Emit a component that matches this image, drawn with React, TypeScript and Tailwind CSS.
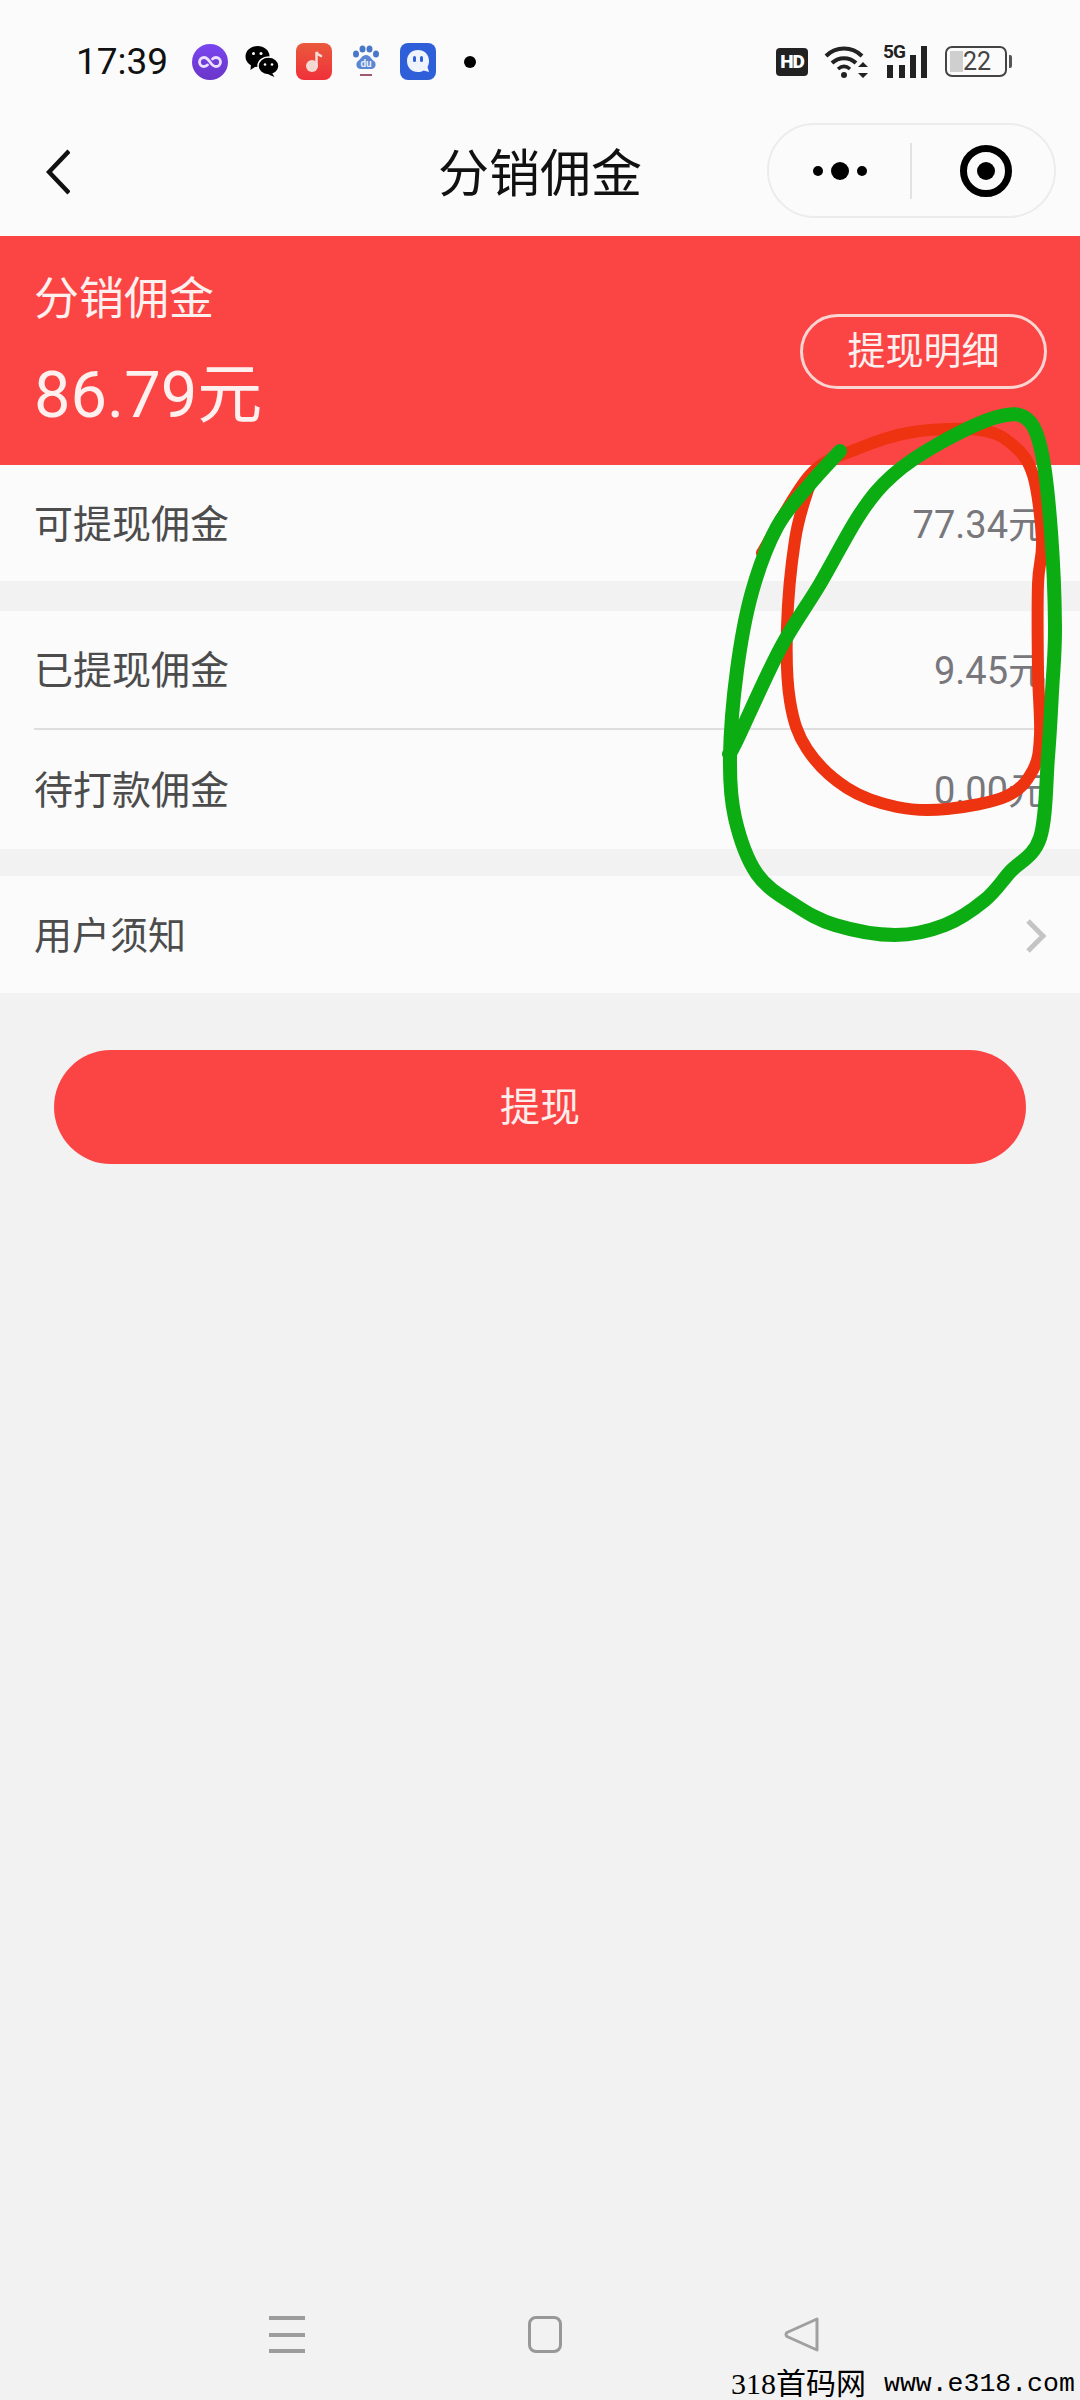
import React from "react";

type Pt = [number, number];

const GREEN: Pt[] = [
  [840, 451], [810, 484], [777, 527], [752, 592], [737, 670], [730, 757], [735, 818], [757, 874],
  [795, 905], [835, 925], [895, 935], [945, 925], [985, 900], [1010, 872], [1040, 838], [1048, 757],
  [1052, 692], [1055, 627], [1051, 532], [1042, 454], [1027, 419], [997, 417], [940, 443], [893, 475],
  [860, 514], [820, 584], [780, 649], [737, 740], [729, 754],
];

const RED: Pt[] = [
  [762, 553], [810, 475], [857, 449], [913, 432], [980, 430], [1013, 445], [1033, 475], [1042, 540],
  [1038, 584], [1038, 670], [1040, 735], [1033, 770], [1007, 796], [947, 809], [897, 807], [847, 788],
  [807, 749], [790, 701], [787, 627], [795, 540], [808, 490], [818, 470],
];

// catmull-rom through the hand-drawn points
function smooth(pts: Pt[]): string {
  let d = `M${pts[0][0]} ${pts[0][1]}`;
  for (let i = 0; i < pts.length - 1; i++) {
    const p0 = pts[Math.max(i - 1, 0)];
    const p1 = pts[i];
    const p2 = pts[i + 1];
    const p3 = pts[Math.min(i + 2, pts.length - 1)];
    const c1x = p1[0] + (p2[0] - p0[0]) / 6;
    const c1y = p1[1] + (p2[1] - p0[1]) / 6;
    const c2x = p2[0] - (p3[0] - p1[0]) / 6;
    const c2y = p2[1] - (p3[1] - p1[1]) / 6;
    d += ` C${c1x} ${c1y} ${c2x} ${c2y} ${p2[0]} ${p2[1]}`;
  }
  return d;
}

function AppIcons() {
  return (
    <div className="flex items-center gap-[16px]">
      {/* purple link */}
      <svg width="36" height="36" viewBox="0 0 36 36">
        <defs>
          <linearGradient id="pp" x1="0" y1="0" x2="0" y2="1">
            <stop offset="0" stopColor="#7a45f0" />
            <stop offset="1" stopColor="#6a35c8" />
          </linearGradient>
        </defs>
        <circle cx="18" cy="18" r="18" fill="url(#pp)" />
        <path d="M18 18c-2-3-3.500-4.500-6-4.500a4.500 4.500 0 0 0 0 9c1.500 0 2.600-.5 3.500-1.400M18 18c2 3 3.500 4.500 6 4.500a4.500 4.500 0 0 0 0-9c-1.500 0-2.600.5-3.500 1.400" fill="none" stroke="#eadfff" strokeWidth="2.800" strokeLinecap="round" />
      </svg>
      {/* wechat */}
      <svg width="36" height="36" viewBox="0 0 36 36">
        <ellipse cx="13.500" cy="12.500" rx="12" ry="10.500" fill="#000" />
        <path d="M7 20l-.5 6 6-4z" fill="#000" />
        <ellipse cx="24.500" cy="22" rx="10.500" ry="9" stroke="#fbfbfb" strokeWidth="1.500" fill="#000" />
        <path d="M28 29l2.500 4-6-2.500z" fill="#000" />
        <circle cx="9.500" cy="9.500" r="1.500" fill="#fbfbfb" />
        <circle cx="17" cy="9.500" r="1.500" fill="#fbfbfb" />
        <circle cx="21" cy="20.500" r="1.300" fill="#fbfbfb" />
        <circle cx="28" cy="20.500" r="1.300" fill="#fbfbfb" />
      </svg>
      {/* music */}
      <svg width="36" height="37" viewBox="0 0 36 37">
        <defs>
          <linearGradient id="rd" x1="0" y1="0" x2="0" y2="1">
            <stop offset="0" stopColor="#ea5a3c" />
            <stop offset="1" stopColor="#f0303a" />
          </linearGradient>
        </defs>
        <rect width="36" height="37" rx="8" fill="url(#rd)" />
        <circle cx="16" cy="23" r="6" fill="#f3d8d2" />
        <path d="M20.500 23V9c1 2.500 3 3.500 4.500 4" fill="none" stroke="#f6dcd6" strokeWidth="2.500" strokeLinecap="round" />
      </svg>
      {/* baidu */}
      <svg width="36" height="36" viewBox="0 0 36 36">
        <ellipse cx="8" cy="10" rx="3" ry="3.500" fill="#4a78c8" />
        <ellipse cx="14.500" cy="5" rx="3" ry="3.500" fill="#4a78c8" />
        <ellipse cx="21.500" cy="5" rx="3" ry="3.500" fill="#4a78c8" />
        <ellipse cx="28" cy="10" rx="3" ry="3.500" fill="#4a78c8" />
        <path d="M18 11c-4 0-5 4-8 6-3 2.500-1.500 8 2.500 8h11c4 0 5.500-5.500 2.500-8-3-2-4-6-8-6z" fill="#5a86d2" />
        <text x="18" y="23" textAnchor="middle" fontSize="10" fontFamily="Roboto, sans-serif" fontWeight="700" fill="#e8eefa">du</text>
        <rect x="12" y="30" width="12" height="2" fill="#a05a70" />
      </svg>
      {/* blue ghost */}
      <svg width="36" height="37" viewBox="0 0 36 37">
        <rect width="36" height="37" rx="8" fill="#2f5fd8" />
        <path d="M18 7c-6.500 0-11 4.500-11 11s4.500 11 11 11c2 0 4-.5 5.500-1.500L29 29l-1.500-5c1-1.800 1.500-3.800 1.500-6 0-6.500-4.500-11-11-11z" fill="#eef3fd" />
        <rect x="13" y="13" width="3" height="6" rx="1.500" fill="#2f5fd8" />
        <rect x="20" y="13" width="3" height="6" rx="1.500" fill="#2f5fd8" />
      </svg>
      <div className="ml-[12px] h-[12px] w-[12px] rounded-full bg-black" />
    </div>
  );
}

function SysIcons() {
  return (
    <div className="flex items-center">
      <div className="flex h-[28px] w-[32px] items-center justify-center rounded-[4px] bg-[#222] font-['Roboto',sans-serif] text-[19px] leading-none font-black tracking-[-1px] text-white">
        HD
      </div>
      {/* wifi */}
      <svg className="ml-[16px]" width="45" height="34" viewBox="0 0 45 34">
        <path d="M2 11C12 1 28 1 38 11" fill="none" stroke="#222" strokeWidth="4" />
        <path d="M8 18c7-6.500 17-6.500 24 0" fill="none" stroke="#222" strokeWidth="4" />
        <path d="M14 24c4-3.500 8-3.500 12 0" fill="none" stroke="#222" strokeWidth="3.500" />
        <circle cx="20" cy="30" r="3" fill="#222" />
        <path d="M39 17l5 5H34zM39 33l5-5H34z" fill="#222" />
      </svg>
      {/* 5G + signal */}
      <div className="relative ml-[14px] h-[34px] w-[45px]">
        <span className="absolute top-[-3px] left-0 font-['Roboto',sans-serif] text-[19px] leading-[20px] font-bold tracking-[-1px] text-[#222]">5G</span>
        <svg className="absolute top-0 left-0" width="45" height="34" viewBox="0 0 45 34">
          <rect x="4" y="20" width="6" height="13" fill="#222" />
          <rect x="16" y="20" width="6" height="13" fill="#222" />
          <rect x="27" y="10" width="6" height="23" fill="#222" />
          <rect x="38" y="1" width="6" height="32" fill="#222" />
        </svg>
      </div>
      {/* battery */}
      <div className="ml-[17px] flex items-center">
        <div className="relative flex h-[31px] w-[62px] items-center overflow-hidden rounded-[7px] border-[2px] border-[#444]">
          <div className="ml-[3px] h-[21px] w-[13px] bg-[#cfcfcf]" />
          <span className="absolute left-[16px] font-['Roboto',sans-serif] text-[25px] leading-none text-[#444]">22</span>
        </div>
        <div className="ml-[2px] h-[13px] w-[3px] rounded-r-[2px] bg-[#555]" />
      </div>
    </div>
  );
}

function Row({ label, value, border }: { label: string; value?: string; border?: boolean }) {
  return (
    <div className={`flex h-full items-center justify-between pt-[4px] ${border ? "border-b-[2px] border-[#dedede]" : ""}`}>
      <span className="text-[39px] text-[#4c4c4c]">{label}</span>
      {value ? <span className="text-[38px] text-[#77777c]">{value}</span> : null}
    </div>
  );
}

export default function App() {
  return (
    <div className="relative h-[2400px] w-[1080px] overflow-hidden bg-[#f3f2f3] font-['Roboto','Noto_Sans_CJK_SC',sans-serif]">
      {/* status bar + nav */}
      <div className="bg-[#fbfbfb]">
        <div className="flex h-[123px] items-center justify-between pr-[68px] pl-[76px]">
          <div className="flex items-center gap-[23px]">
            <span className="w-[93px] text-[37px] text-[#111]">17:39</span>
            <AppIcons />
          </div>
          <SysIcons />
        </div>
        <div className="relative flex h-[113px] items-start justify-between pr-[24px] pl-[46px]">
          <svg className="mt-[26px]" width="24" height="46" viewBox="0 0 24 46">
            <path d="M23 2L3 23l20 21" fill="none" stroke="#111" strokeWidth="4.500" />
          </svg>
          <div className="absolute top-[24px] left-0 w-full text-center text-[51px] leading-[56px] text-[#111]">分销佣金</div>
          <div className="relative flex h-[95px] w-[289px] items-center rounded-full border-[2px] border-[#ececec]">
            <div className="flex w-[141px] items-center justify-center gap-[8px]">
              <div className="h-[10px] w-[10px] rounded-full bg-black" />
              <div className="h-[18px] w-[18px] rounded-full bg-black" />
              <div className="h-[10px] w-[10px] rounded-full bg-black" />
            </div>
            <div className="h-[56px] w-[2px] bg-[#e2e2e2]" />
            <div className="flex flex-1 items-center justify-center pl-[6px]">
              <div className="flex h-[52px] w-[52px] items-center justify-center rounded-full border-[7px] border-black">
                <div className="h-[18px] w-[18px] rounded-full bg-black" />
              </div>
            </div>
          </div>
        </div>
      </div>

      {/* balance */}
      <div className="flex h-[229px] items-start justify-between bg-[#fb4545] pr-[33px] pl-[34px] text-[#fdf0ee]">
        <div>
          <div className="mt-[36px] text-[45px] leading-[56px]">分销佣金</div>
          <div className="mt-[25px] text-[65px] leading-[84px]">86.79元</div>
        </div>
        <div className="mt-[78px] flex h-[75px] w-[247px] items-center justify-center rounded-full border-[3px] border-[#fbd5d2] text-[38px]">
          提现明细
        </div>
      </div>

      <div className="h-[116px] bg-[#fbfbfb] px-[34px]">
        <Row label="可提现佣金" value="77.34元" />
      </div>
      <div className="mt-[30px] h-[238px] bg-[#fbfbfb] px-[34px]">
        <div className="h-[119px]">
          <Row label="已提现佣金" value="9.45元" border />
        </div>
        <div className="h-[119px]">
          <Row label="待打款佣金" value="0.00元" />
        </div>
      </div>
      <div className="mt-[27px] flex h-[117px] items-center justify-between bg-[#fbfbfb] pt-[3px] pr-[33px] pl-[34px]">
        <span className="text-[38px] text-[#4c4c4c]">用户须知</span>
        <svg width="22" height="36" viewBox="0 0 22 36">
          <path d="M3 3l15 15L3 33" fill="none" stroke="#c4c4c4" strokeWidth="5" />
        </svg>
      </div>

      <div className="mx-[54px] mt-[57px] flex h-[114px] items-center justify-center rounded-full bg-[#fb4545] pt-[2px] text-[40px] text-[#fdeeec]">
        提现
      </div>

      {/* system nav */}
      <div className="absolute top-[2316px] left-[269px] flex w-[551px] items-center justify-between">
        <div className="flex h-[37px] w-[36px] flex-col justify-between">
          <div className="h-[4px] bg-[#9c9c9c]" />
          <div className="h-[4px] bg-[#9c9c9c]" />
          <div className="h-[4px] bg-[#9c9c9c]" />
        </div>
        <div className="h-[37px] w-[34px] rounded-[8px] border-[3px] border-[#989898]" />
        <svg width="36" height="37" viewBox="0 0 36 37">
          <path d="M33 3v31L3 20.500a2.500 2.500 0 0 1 0-4z" fill="none" stroke="#a0a0a0" strokeWidth="3" strokeLinejoin="round" />
        </svg>
      </div>

      {/* watermark */}
      <div className="absolute top-[2368px] left-[731px] flex h-[32px] w-[349px] items-center text-black">
        <span className="font-['Liberation_Serif','Noto_Sans_CJK_SC',serif] text-[30px] leading-none whitespace-pre">318首码网</span>
        <span className="ml-[18px] font-['Liberation_Mono',monospace] text-[26.500px] leading-none whitespace-pre">www.e318.com</span>
      </div>

      {/* hand-drawn marks over the screenshot */}
      <svg className="pointer-events-none absolute top-0 left-0" width="1080" height="2400" viewBox="0 0 1080 2400">
        <path d={smooth(RED)} fill="none" stroke="#ee3311" strokeWidth="12" strokeLinecap="round" strokeLinejoin="round" />
        <path d={smooth(GREEN)} fill="none" stroke="#0cad12" strokeWidth="14" strokeLinecap="round" strokeLinejoin="round" />
      </svg>
    </div>
  );
}
